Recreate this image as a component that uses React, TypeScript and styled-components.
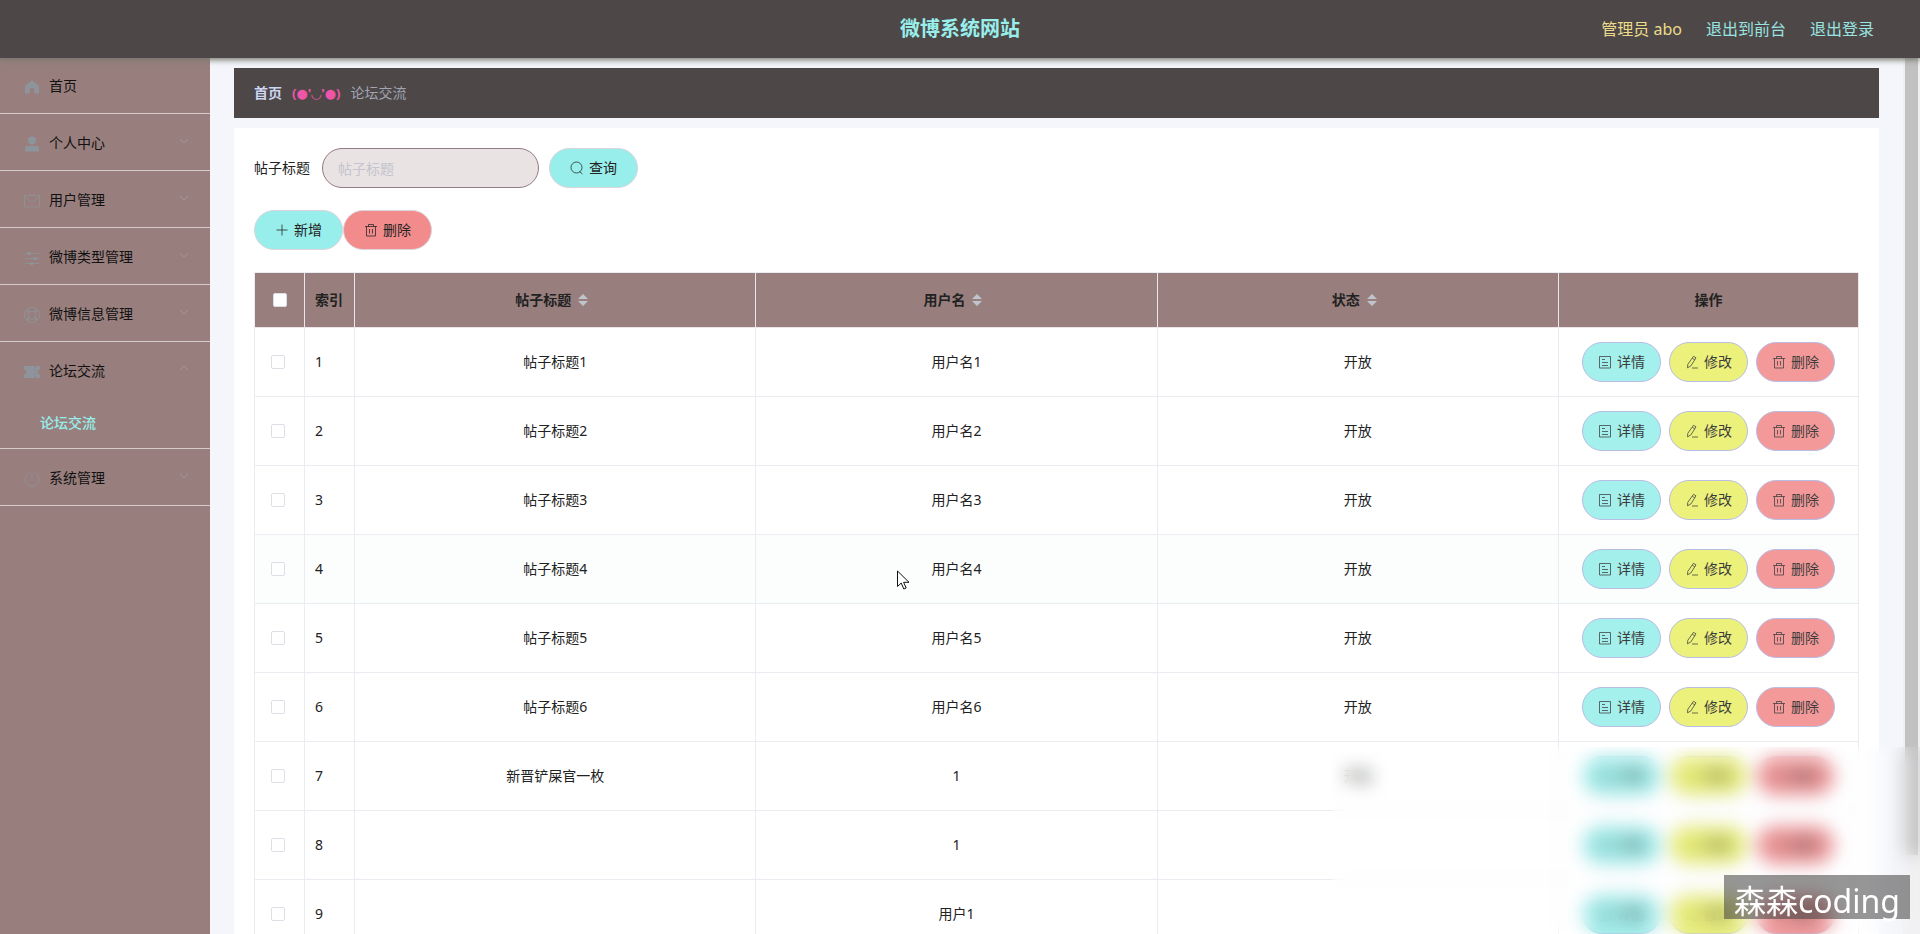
import React from "react";
import styled, { createGlobalStyle, css } from "styled-components";

const GlobalStyle = createGlobalStyle`
  *, *::before, *::after { box-sizing: border-box; }
  body {
    margin: 0;
    overflow: hidden;
    font-family: "Noto Sans", "Noto Sans CJK SC", sans-serif;
    font-size: 14px;
    line-height: 20px;
    color: #222;
  }
  button, input { font: inherit; }
  a { color: inherit; text-decoration: none; }
`;

const Shell = styled.div`
  display: flex;
  flex-direction: column;
  height: 100vh;
  overflow: hidden;
  background: #f5f6fb;
`;

const Header = styled.header`
  display: grid;
  grid-template-columns: 1fr auto 1fr;
  align-items: center;
  flex: none;
  height: 57px;
  padding: 0 46px;
  background: #4e4747;
  box-shadow: 0 1px 0 #4e4747, 0 2px 6px 1px #77776f;
  position: relative;
  z-index: 2;
`;

const SiteTitle = styled.h1`
  grid-column: 2;
  margin: 0;
  font-size: 20px;
  line-height: 28px;
  font-weight: 700;
  color: #97eeea;
`;

const Account = styled.nav`
  display: flex;
  justify-content: flex-end;
  gap: 24px;
  font-size: 16px;
  line-height: 24px;
  color: #97e4e0;
`;

const UserName = styled.span`
  color: #ecdc8a;
`;

const Body = styled.div`
  display: flex;
  flex: 1;
  min-height: 0;
`;

const Sidebar = styled.aside`
  flex: none;
  width: 210px;
  background: #987f7e;
`;

const Menu = styled.ul`
  list-style: none;
  margin: 0;
  padding: 0;
`;

const MenuGroup = styled.li`
  border-bottom: 1px solid #d5cbc9;
`;

const MenuLink = styled.a`
  display: flex;
  align-items: center;
  gap: 8px;
  height: 56px;
  padding: 0 20px 0 23px;
  color: #111;

  svg { color: #8e949b; }
  svg:first-child { margin-top: 4px; }
`;

const MenuText = styled.span`
  flex: 1;
  padding-top: 2px;
`;

const SubLink = styled.a`
  display: flex;
  align-items: center;
  height: 50px;
  padding-left: 40px;
  font-weight: 500;
  color: #97eeea;
`;

const Main = styled.main`
  flex: 1;
  min-width: 0;
  padding: 11px 24px 0;
  overflow: hidden;
`;

const Breadcrumb = styled.nav`
  display: flex;
  align-items: center;
  gap: 10px;
  height: 50px;
  padding: 0 20px;
  background: #4e4747;
  color: #9fa5b3;
`;

const CrumbHome = styled.a`
  font-weight: 700;
  color: #ccd6f2;
`;

const CrumbMark = styled.span`
  font-family: "Noto Sans", "DejaVu Sans", sans-serif;
  font-size: 13px;
  font-weight: 700;
  color: #ee55a8;
`;

const Panel = styled.section`
  margin-top: 10px;
  padding: 20px;
  background: #fff;
`;

const SearchForm = styled.form`
  display: flex;
  align-items: center;
  gap: 10px;
`;

const SearchLabel = styled.label`
  margin-right: 2px;
`;

const SearchInput = styled.input`
  width: 217px;
  height: 40px;
  padding: 0 15px;
  border: 1px solid #917c85;
  border-radius: 20px;
  background: #eae3e3;
  color: #333;
  outline: none;

  &::placeholder { color: #c3c4ce; opacity: 1; }
`;

const tones = {
  cyan: "#97eeea",
  yellow: "#eaf069",
  red: "#f28c8c",
};

const PillButton = styled.button<{ $tone: keyof typeof tones; $compact?: boolean }>`
  display: inline-flex;
  align-items: center;
  justify-content: center;
  gap: 5px;
  height: 40px;
  padding: 0 20px;
  border: 1px solid #dcd4dc;
  border-radius: 20px;
  background: ${(p) => tones[p.$tone]};
  color: #222;
  white-space: nowrap;
  cursor: pointer;

  ${(p) =>
    p.$compact &&
    css`
      padding: 0 15px;
      border-color: #b0b4e0;
      opacity: 0.88;
    `}
`;

const Toolbar = styled.div`
  display: flex;
  margin: 22px 0;
`;

const Table = styled.table`
  width: 100%;
  table-layout: fixed;
  border-collapse: separate;
  border-spacing: 0;
  border: solid #ebebf2;
  border-width: 1px 0 0 1px;
`;

const HeadCell = styled.th<{ $left?: boolean }>`
  height: 55px;
  padding: 0 10px;
  border: solid #ebe6ea;
  border-width: 0 1px 1px 0;
  background: #987f7e;
  font-weight: 700;
  text-align: ${(p) => (p.$left ? "left" : "center")};
  white-space: nowrap;
`;

const SortHead = styled.span`
  display: inline-flex;
  align-items: center;
`;

const Row = styled.tr<{ $hover?: boolean }>`
  background: ${(p) => (p.$hover ? "#fbfefd" : "#fff")};
`;

const Cell = styled.td<{ $left?: boolean }>`
  height: 69px;
  padding: 0 10px;
  border: solid #ebebf2;
  border-width: 0 1px 1px 0;
  text-align: ${(p) => (p.$left ? "left" : "center")};
`;

const Tick = styled.input`
  appearance: none;
  display: block;
  width: 14px;
  height: 14px;
  margin: 0 0 0 6px;
  border: 1px solid #dcdfe6;
  border-radius: 2px;
  background: #fff;

  th & { margin-left: 8px; }
`;

const Actions = styled.div`
  display: flex;
  justify-content: center;
  gap: 8px;
`;

const ScrollTrack = styled.div`
  display: flex;
  flex: none;
  width: 17px;
  padding: 0 2px;
  background: #f0f0f1;
`;

const ScrollThumb = styled.div`
  flex: 1;
  height: 91%;
  background: #c1c1c1;
`;

const Haze = styled.div`
  position: fixed;
  left: calc(70% - 12px);
  right: 0;
  top: 80%;
  bottom: 0;
  backdrop-filter: blur(9px);
  z-index: 3;
`;

const Watermark = styled.div`
  position: fixed;
  right: 10px;
  bottom: 15px;
  height: 44px;
  padding: 0 10px;
  background: rgba(64, 64, 64, 0.55);
  color: #fff;
  font-size: 32px;
  line-height: 52px;
  z-index: 4;
`;

const Pointer = styled.svg`
  position: fixed;
  left: 897px;
  top: 570px;
  z-index: 5;
`;

type IconName =
  | "home" | "user" | "mail" | "sliders" | "ring" | "ticket" | "power"
  | "search" | "plus" | "trash" | "doc" | "edit";

const solid = { fill: "currentColor", stroke: "none" };

const shapes: Record<IconName, React.ReactNode> = {
  home: <path {...solid} d="M9 2.2 2.6 7.2Q2 7.700 2 8.500V15.500H6.600V11.500Q6.600 9.800 9 9.800T11.400 11.500V15.500H16V8.500Q16 7.700 15.400 7.200Z" />,
  user: <path {...solid} d="M9 1.500a4 4 0 1 1 0 8 4 4 0 0 1 0-8ZM2 16.500V14q0-3 3-3h8q3 0 3 3v2.500Z" />,
  mail: <path d="M1.500 3.500h15v11.500h-15ZM1.500 4 7.500 9.500q1.500 1.200 3 0L16.500 4" />,
  sliders: (
    <>
      <path d="M2 4.500h14M2 9.500h14M2 14.500h14" />
      <path {...solid} d="M5 3h2.500v3H5ZM11 8h2.500v3H11ZM7.500 13H10v3H7.500Z" />
    </>
  ),
  ring: (
    <>
      <circle cx="9" cy="9" r="7.500" />
      <circle cx="9" cy="9" r="4" />
      <path d="m3.700 3.700 2.500 2.500M14.300 3.700l-2.500 2.500M3.700 14.300l2.500-2.500M14.300 14.300l-2.500-2.500" strokeWidth="2" />
    </>
  ),
  ticket: <path {...solid} d="M1 3h10.500v2h1V3H17v3.500a2.500 2.500 0 0 0 0 5V15h-4.500v-2h-1v2H1v-3.500a2.500 2.500 0 0 0 0-5ZM11.500 6.500v1.500h1V6.500ZM11.500 10v1.500h1V10Z" />,
  power: <path d="M9 1.500v7M6 3a7 7 0 1 0 6 0" />,
  search: (
    <>
      <circle cx="6.500" cy="6.500" r="5.500" />
      <path d="M9.500 10.500 12.500 13" />
    </>
  ),
  plus: <path d="M7 1.500v11M1.500 7h11" />,
  trash: <path d="M1 3.500h12M4.500 3.500v-2h5v2M2.500 3.500v9.500h9V3.500M5.500 6v4.500M8.500 6v4.500" />,
  doc: <path d="M1.500 1.500h11v11.500h-11ZM4 4.500h3M4 7.500h6M4 10.500h6" />,
  edit: <path d="M8.500 1.300 11 2.800 5.800 11 2.500 12.800 2.800 9.300ZM7.300 3.300l2.500 1.500M7 13h6" />,
};

function Icon({ name, size = 14 }: { name: IconName; size?: number }) {
  return (
    <svg width={size} height={size} viewBox={`0 0 ${size} ${size}`} fill="none" stroke="currentColor" strokeOpacity="0.75" aria-hidden="true">
      {shapes[name]}
    </svg>
  );
}

function Chevron({ open }: { open?: boolean }) {
  return (
    <svg width="12" height="12" viewBox="0 0 12 12" fill="none" stroke="#a39497" aria-hidden="true">
      <path d={open ? "m2 6 4-4 4 4" : "m2 3 4 4 4-4"} />
    </svg>
  );
}

function SortCarets() {
  return (
    <svg width="24" height="14" viewBox="0 0 24 14" fill="#c0c4cc" aria-hidden="true">
      <path d="M7 6h10l-5-5ZM7 8h10l-5 5Z" />
    </svg>
  );
}

const menu: { icon: IconName; text: string; child?: string }[] = [
  { icon: "home", text: "首页" },
  { icon: "user", text: "个人中心" },
  { icon: "mail", text: "用户管理" },
  { icon: "sliders", text: "微博类型管理" },
  { icon: "ring", text: "微博信息管理" },
  { icon: "ticket", text: "论坛交流", child: "论坛交流" },
  { icon: "power", text: "系统管理" },
];

const posts = [
  { title: "帖子标题1", user: "用户名1", state: "开放" },
  { title: "帖子标题2", user: "用户名2", state: "开放" },
  { title: "帖子标题3", user: "用户名3", state: "开放" },
  { title: "帖子标题4", user: "用户名4", state: "开放" },
  { title: "帖子标题5", user: "用户名5", state: "开放" },
  { title: "帖子标题6", user: "用户名6", state: "开放" },
  { title: "新晋铲屎官一枚", user: "1", state: "开放" },
  { title: "", user: "1", state: "" },
  { title: "", user: "用户1", state: "" },
];

export default function App() {
  return (
    <Shell>
      <GlobalStyle />
      <Header>
        <SiteTitle>微博系统网站</SiteTitle>
        <Account>
          <UserName>管理员 abo</UserName>
          <a href="#front">退出到前台</a>
          <a href="#logout">退出登录</a>
        </Account>
      </Header>
      <Body>
        <Sidebar>
          <Menu>
            {menu.map((item) => (
              <MenuGroup key={item.text}>
                <MenuLink href="#menu">
                  <Icon name={item.icon} size={18} />
                  <MenuText>{item.text}</MenuText>
                  {item.icon !== "home" && <Chevron open={!!item.child} />}
                </MenuLink>
                {item.child && <SubLink href="#forum">{item.child}</SubLink>}
              </MenuGroup>
            ))}
          </Menu>
        </Sidebar>
        <Main>
          <Breadcrumb>
            <CrumbHome href="#home">首页</CrumbHome>
            <CrumbMark>(●'◡'●)</CrumbMark>
            <span>论坛交流</span>
          </Breadcrumb>
          <Panel>
            <SearchForm onSubmit={(e) => e.preventDefault()}>
              <SearchLabel htmlFor="post-title">帖子标题</SearchLabel>
              <SearchInput id="post-title" type="text" placeholder="帖子标题" />
              <PillButton $tone="cyan" type="submit">
                <Icon name="search" />
                查询
              </PillButton>
            </SearchForm>
            <Toolbar>
              <PillButton $tone="cyan" type="button">
                <Icon name="plus" />
                新增
              </PillButton>
              <PillButton $tone="red" type="button">
                <Icon name="trash" />
                删除
              </PillButton>
            </Toolbar>
            <Table>
              <colgroup>
                <col width="50" />
                <col width="50" />
                <col />
                <col />
                <col />
                <col width="300" />
              </colgroup>
              <thead>
                <tr>
                  <HeadCell><Tick type="checkbox" aria-label="全选" /></HeadCell>
                  <HeadCell $left>索引</HeadCell>
                  {["帖子标题", "用户名", "状态"].map((text) => (
                    <HeadCell key={text}>
                      <SortHead>{text}<SortCarets /></SortHead>
                    </HeadCell>
                  ))}
                  <HeadCell>操作</HeadCell>
                </tr>
              </thead>
              <tbody>
                {posts.map((post, i) => (
                  <Row key={i} $hover={i === 3}>
                    <Cell><Tick type="checkbox" aria-label={`选择 ${i + 1}`} /></Cell>
                    <Cell $left>{i + 1}</Cell>
                    <Cell>{post.title}</Cell>
                    <Cell>{post.user}</Cell>
                    <Cell>{post.state}</Cell>
                    <Cell>
                      <Actions>
                        <PillButton $tone="cyan" $compact type="button"><Icon name="doc" />详情</PillButton>
                        <PillButton $tone="yellow" $compact type="button"><Icon name="edit" />修改</PillButton>
                        <PillButton $tone="red" $compact type="button"><Icon name="trash" />删除</PillButton>
                      </Actions>
                    </Cell>
                  </Row>
                ))}
              </tbody>
            </Table>
          </Panel>
        </Main>
        <ScrollTrack><ScrollThumb /></ScrollTrack>
      </Body>
      <Haze />
      <Watermark>森森coding</Watermark>
      <Pointer width="14" height="21" viewBox="0 0 14 21" fill="#fff" stroke="#111" aria-hidden="true">
        <path d="M.5 1v15.500l3.700-3.500 2.600 6 2.400-1-2.600-5.700h5.400Z" />
      </Pointer>
    </Shell>
  );
}
